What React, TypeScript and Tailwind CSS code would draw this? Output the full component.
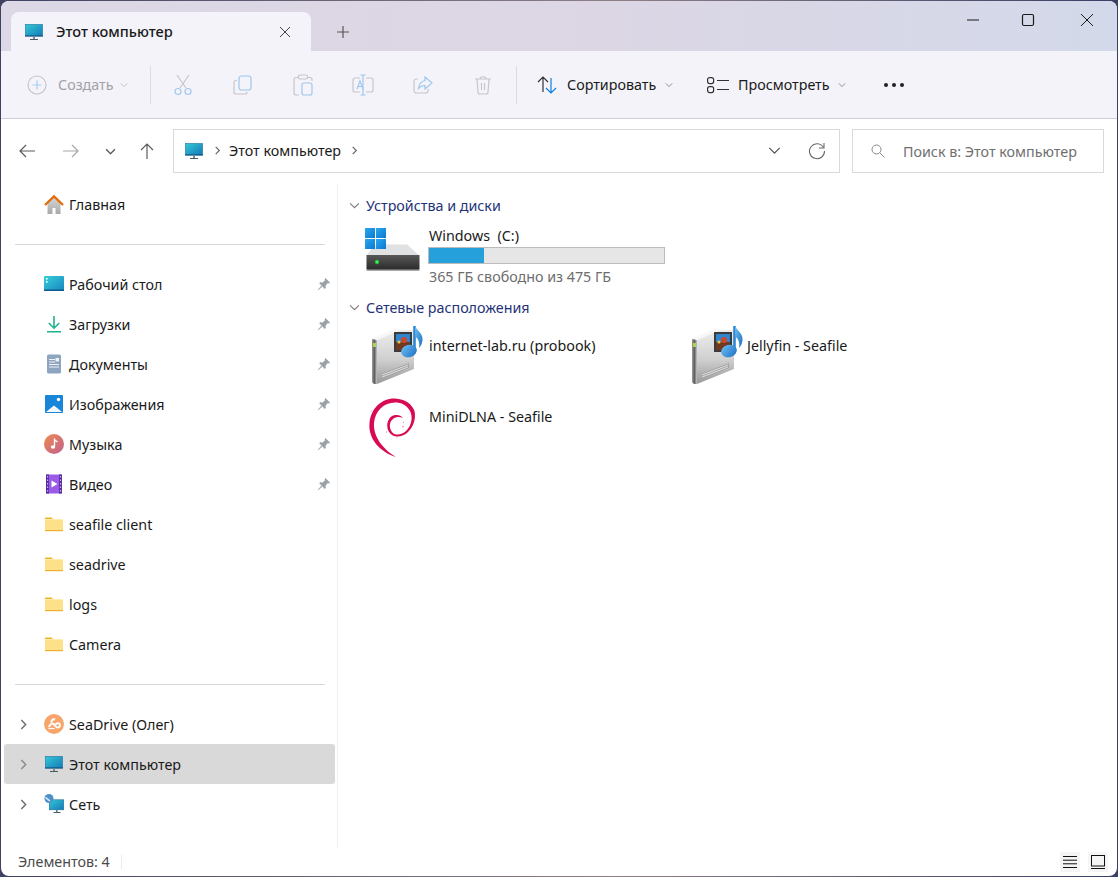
import React from "react";

const Monitor = ({ w = 20, id = "m" }: { w?: number; id?: string }) => (
  <svg width={w} height={w} viewBox="0 0 20 20" className="shrink-0">
    <defs>
      <linearGradient id={id} x1="0" y1="0" x2="1" y2="1">
        <stop offset="0" stopColor="#35c9d6" />
        <stop offset="1" stopColor="#1279b8" />
      </linearGradient>
    </defs>
    <rect x="1.5" y="2.5" width="17" height="11.5" fill={`url(#${id})`} stroke="#1a6f9f" strokeWidth="0.6" />
    <rect x="1" y="13.5" width="18" height="1" fill="#0d4f7c" />
    <rect x="9" y="14.5" width="2" height="3" fill="#7a8a94" />
    <rect x="6" y="17" width="8" height="1" fill="#4d5a63" />
  </svg>
);

const Folder = () => (
  <svg width="20" height="20" viewBox="0 0 20 20" className="shrink-0">
    <path d="M1 3.5h6.5l2 2H1z" fill="#f5b324" />
    <rect x="1" y="5" width="18" height="12" fill="#fde08a" />
    <rect x="1" y="16" width="18" height="1.2" fill="#eeb02e" />
    <rect x="1" y="5" width="18" height="0.8" fill="#fdeeb8" />
  </svg>
);

const Home = () => (
  <svg width="20" height="20" viewBox="0 0 20 20" className="shrink-0">
    <defs>
      <linearGradient id="hm" x1="0" y1="0" x2="0" y2="1">
        <stop offset="0" stopColor="#d6d6d6" />
        <stop offset="1" stopColor="#a8a8a8" />
      </linearGradient>
    </defs>
    <path d="M3.5 9.5 10 3.5l6.5 6V20h-5v-6h-3v6h-5z" fill="url(#hm)" />
    <path d="M1 11 10 2.5l9 8.5" fill="none" stroke="#e46c0a" strokeWidth="2.4" />
  </svg>
);

const Desktop = () => (
  <svg width="20" height="20" viewBox="0 0 20 20" className="shrink-0">
    <defs>
      <linearGradient id="dsk" x1="0" y1="0" x2="1" y2="1">
        <stop offset="0" stopColor="#37d0d8" />
        <stop offset="1" stopColor="#1785c2" />
      </linearGradient>
    </defs>
    <rect x="0" y="2" width="20" height="15" rx="1" fill="url(#dsk)" />
    <rect x="0" y="15.5" width="20" height="1.5" fill="#0e5a8c" />
    <rect x="2" y="4" width="1.6" height="1.6" fill="#fff" />
    <rect x="2" y="7" width="1.6" height="1.6" fill="#fff" />
  </svg>
);

const Download = () => (
  <svg width="20" height="20" viewBox="0 0 20 20" className="shrink-0">
    <path d="M10 2v12M4.8 9 10 14.2 15.2 9" fill="none" stroke="#1fb292" strokeWidth="1.6" />
    <rect x="3" y="17" width="14" height="1.5" fill="#1fb292" />
  </svg>
);

const Docs = () => (
  <svg width="20" height="20" viewBox="0 0 20 20" className="shrink-0">
    <rect x="3" y="0.5" width="14" height="19" rx="1.5" fill="#8ea5c2" />
    <rect x="5" y="5" width="6" height="1" fill="#eef2f7" />
    <rect x="5" y="7.5" width="6" height="1" fill="#eef2f7" />
    <rect x="11.5" y="4" width="3.5" height="3.5" fill="#eef2f7" />
    <rect x="5" y="10" width="10" height="1" fill="#eef2f7" />
    <rect x="5" y="12.5" width="10" height="1" fill="#eef2f7" />
  </svg>
);

const Pictures = () => (
  <svg width="20" height="20" viewBox="0 0 20 20" className="shrink-0">
    <rect x="1" y="1" width="18" height="18" rx="1" fill="#1a86d8" />
    <path d="M2 18 10 11.5 18 18z" fill="#f4f9fd" />
    <circle cx="14.5" cy="5.5" r="1.7" fill="#fff" />
  </svg>
);

const Music = () => (
  <svg width="20" height="20" viewBox="0 0 20 20" className="shrink-0">
    <defs>
      <linearGradient id="mus" x1="0" y1="0" x2="1" y2="1">
        <stop offset="0" stopColor="#ee8a4f" />
        <stop offset="1" stopColor="#c2608f" />
      </linearGradient>
    </defs>
    <circle cx="10" cy="10" r="10" fill="url(#mus)" />
    <path d="M10.5 4.5v8" stroke="#fff" strokeWidth="1.4" />
    <path d="M10.5 4.5c.5 1.8 2 2 3 2.4v1.5c-1.2-.3-2.4-.8-3-1.6z" fill="#fff" />
    <ellipse cx="9" cy="13" rx="2.2" ry="1.8" fill="#fff" />
  </svg>
);

const Video = () => (
  <svg width="20" height="20" viewBox="0 0 20 20" className="shrink-0">
    <rect x="2" y="0.5" width="16" height="19" rx="1" fill="#9a5be6" />
    <rect x="2" y="0.5" width="3" height="19" fill="#5b2da3" />
    <rect x="15" y="0.5" width="3" height="19" fill="#5b2da3" />
    {[2, 5.5, 9, 12.5, 16].map((y) => (
      <React.Fragment key={y}>
        <rect x="3" y={y} width="1.2" height="1.5" fill="#cdb2f3" />
        <rect x="15.9" y={y} width="1.2" height="1.5" fill="#cdb2f3" />
      </React.Fragment>
    ))}
    <path d="M7.5 6.5v7l6-3.5z" fill="#fff" />
  </svg>
);

const SeaDrive = () => (
  <svg width="20" height="20" viewBox="0 0 20 20" className="shrink-0">
    <circle cx="10" cy="10" r="10" fill="#f8a56c" />
    <path d="M4.5 12.5c1.5-.3 2-3 4-3 2.2 0 2.6 4 5 4 1.5 0 2.5-1 2.5-2.2s-1-2-2.2-2c-1 0-1.7.6-2.3 1.2" fill="none" stroke="#fff" strokeWidth="1.9" />
    <path d="M7.5 8.5c-.6-2 1.4-3.7 3.6-3" fill="none" stroke="#fff" strokeWidth="1.9" />
    <path d="M4.5 14.5h6" stroke="#fff" strokeWidth="1.2" />
  </svg>
);

const Network = () => (
  <svg width="20" height="20" viewBox="0 0 20 20" className="shrink-0">
    <defs>
      <linearGradient id="net" x1="0" y1="0" x2="1" y2="1">
        <stop offset="0" stopColor="#35c9d6" />
        <stop offset="1" stopColor="#1279b8" />
      </linearGradient>
    </defs>
    <rect x="5.3" y="5.8" width="14.4" height="10" fill="url(#net)" stroke="#1a6f9f" strokeWidth="0.6" />
    <rect x="12" y="16" width="1.6" height="2" fill="#6f7f89" />
    <rect x="9.5" y="18" width="7" height="1" fill="#4d5a63" />
    <circle cx="5" cy="4.5" r="4.5" fill="#4b90c8" />
    <path d="M1.5 3.5 6 7" stroke="#cfe3f2" strokeWidth="1.6" />
  </svg>
);

const Pin = () => (
  <svg width="14" height="14" viewBox="0 0 14 14" className="shrink-0">
    <path d="M8.4 1 13 5.6l-1.1.8-1-.3L8.6 8.4l.2 2.5-1 1L2.2 6.3l1-1 2.5.2L8 3.2l-.3-1z" fill="#9aa2a9" />
    <path d="M4.4 8.9 1 13l4.1-3.4z" fill="#9aa2a9" stroke="#9aa2a9" strokeWidth="0.6" />
  </svg>
);

const Chev = ({ dir = "right", c = "#7a7a7a", s = 10, sw = 1.3 }: { dir?: "right" | "down"; c?: string; s?: number; sw?: number }) => (
  <svg width={s} height={s} viewBox="0 0 10 10" className="shrink-0">
    <path d={dir === "right" ? "M3 1l4 4-4 4" : "M1 3l4 4 4-4"} fill="none" stroke={c} strokeWidth={sw} />
  </svg>
);

const Drive = () => (
  <svg width="66" height="54" viewBox="0 0 66 54" className="shrink-0 -mt-[3px]">
    <defs>
      <linearGradient id="drv" x1="0" y1="0" x2="0" y2="1">
        <stop offset="0" stopColor="#585858" />
        <stop offset="1" stopColor="#2a2a2a" />
      </linearGradient>
      <linearGradient id="win" x1="0" y1="0" x2="1" y2="1">
        <stop offset="0" stopColor="#2aa8ee" />
        <stop offset="1" stopColor="#0b78d2" />
      </linearGradient>
      <radialGradient id="led">
        <stop offset="0" stopColor="#7dff6a" />
        <stop offset="0.6" stopColor="#21d13a" />
        <stop offset="1" stopColor="#2a7a35" />
      </radialGradient>
    </defs>
    <path d="M15 22.5h32l12.5 11H6.5z" fill="#e0e1e3" />
    <path d="M6.5 33h53v13.5a1.5 1.5 0 0 1-1.5 1.5H8a1.5 1.5 0 0 1-1.5-1.5z" fill="url(#drv)" />
    <rect x="6.5" y="47.5" width="53" height="1.5" fill="#a9a9a9" />
    <circle cx="17" cy="40" r="2.4" fill="url(#led)" />
    <rect x="5" y="6" width="10" height="10" fill="url(#win)" />
    <rect x="16" y="6" width="10" height="10" fill="url(#win)" />
    <rect x="5" y="17" width="10" height="10" fill="url(#win)" />
    <rect x="16" y="17" width="10" height="10" fill="url(#win)" />
  </svg>
);

const MediaServer = ({ id }: { id: string }) => (
  <svg width="54" height="62" viewBox="8 4 54 62" className="shrink-0">
    <defs>
      <linearGradient id={`${id}a`} x1="0" y1="0" x2="0" y2="1">
        <stop offset="0" stopColor="#eeeeee" />
        <stop offset="0.55" stopColor="#cfcfcf" />
        <stop offset="1" stopColor="#9a9a9a" />
      </linearGradient>
      <linearGradient id={`${id}b`} x1="0" y1="0" x2="1" y2="0">
        <stop offset="0" stopColor="#9b9b9b" />
        <stop offset="0.5" stopColor="#5f5f5f" />
        <stop offset="1" stopColor="#c9c9c9" />
      </linearGradient>
      <linearGradient id={`${id}c`} x1="0" y1="0" x2="1" y2="1">
        <stop offset="0" stopColor="#6fc0f2" />
        <stop offset="1" stopColor="#1c6fc4" />
      </linearGradient>
    </defs>
    <path d="M15 20 38 10h14v39L15 64z" fill={`url(#${id}a)`} />
    <path d="M10 18.5 33 9h6L15 20z" fill="#f7f7f7" />
    <path d="M10 19l5 1v44h-2a3 3 0 0 1-3-3z" fill={`url(#${id}b)`} />
    <rect x="11" y="23" width="3" height="4" fill="#a5d84f" />
    <path d="M19 59 47 48v-5L19 54z" fill="#a4a4a4" />
    <path d="M20 57 46 47" stroke="#ececec" strokeWidth="0.8" />
    <path d="M20 55 46 45" stroke="#ececec" strokeWidth="0.8" />
    <rect x="32" y="12" width="18" height="20" fill="#3b3b3b" />
    <rect x="34" y="14" width="14" height="8" fill="#2f86cf" />
    <rect x="34" y="22" width="14" height="8" fill="#6e3b22" />
    <circle cx="42" cy="20" r="3" fill="#d6452a" />
    <circle cx="37" cy="22" r="1.6" fill="#e8c14a" />
    <path d="M52.5 6v25" stroke="#2f87d3" strokeWidth="2.6" />
    <path d="M53 6c2 5 8 7 7.5 14-.2 3-1.5 6-3.5 8 1-5-.5-9-3.5-11z" fill={`url(#${id}c)`} />
    <ellipse cx="47" cy="31" rx="8" ry="6.2" fill={`url(#${id}c)`} transform="rotate(-15 47 31)" />
  </svg>
);

const Debian = () => (
  <svg width="52" height="62" viewBox="4 5 52 62" className="shrink-0">
    <path
      d="M34 65C18 60 6 47 7.5 31 9 16 20 6 33 6.5 43 7 50 12 52.5 19 54 26 52 35 45 41 39 46 30 46 26.5 39 23.5 33 26 24 33 23 37 22.5 40 24 41 26 38 24.5 34 24.5 31 27 27 30 27 36 30 40 33 44 40 43 44 39 50 33 51 25 48 19 45 13 39 10.5 33 10.5 22 10.5 13 19 12 31 11 45 22 58 34 65Z"
      fill="#d70a53"
    />
    <circle cx="51.5" cy="21" r="0.8" fill="#d70a53" />
    <circle cx="41.5" cy="30" r="0.6" fill="#e2608c" />
    <circle cx="41" cy="34.5" r="0.7" fill="#e2608c" />
    <circle cx="24.5" cy="40" r="0.6" fill="#e2608c" />
    <circle cx="35" cy="45" r="0.6" fill="#e2608c" />
    <circle cx="9" cy="19" r="0.5" fill="#e2608c" />
  </svg>
);

const nav = [
  { n: "Рабочий стол", i: <Desktop />, p: true },
  { n: "Загрузки", i: <Download />, p: true },
  { n: "Документы", i: <Docs />, p: true },
  { n: "Изображения", i: <Pictures />, p: true },
  { n: "Музыка", i: <Music />, p: true },
  { n: "Видео", i: <Video />, p: true },
  { n: "seafile client", i: <Folder />, p: false },
  { n: "seadrive", i: <Folder />, p: false },
  { n: "logs", i: <Folder />, p: false },
  { n: "Camera", i: <Folder />, p: false },
];

const NavRow = ({ icon, label, pin, expand, active }: { icon: React.ReactNode; label: string; pin?: boolean; expand?: boolean; active?: boolean }) => (
  <div className={`ml-[3px] mr-[2px] h-10 rounded-[3px] flex items-center ${active ? "bg-[#d9d9d9]" : ""}`}>
    <div className="w-10 flex justify-center pr-[1px]">{expand && <Chev c={active ? "#8a8a8a" : "#6e6e6e"} s={11} />}</div>
    {icon}
    <span className="ml-[5px] pt-[2px] flex-1 text-[#1a1a1a]">{label}</span>
    {pin && <span className="mr-[4px]"><Pin /></span>}
  </div>
);

const NavSep = () => (
  <div className="h-10 flex items-center">
    <div className="ml-[14px] w-[310px] h-px bg-[#d8d8d8]" />
  </div>
);

const Tool = ({ children }: { children: React.ReactNode }) => (
  <div className="w-[60px] flex justify-center">{children}</div>
);

const Heading = ({ t }: { t: string }) => (
  <div className="flex items-center h-5 pl-[11px]">
    <Chev dir="down" c="#7d7d7d" s={11} sw={1} />
    <span className="ml-[6px] pt-[2px] text-[#1f3378]">{t}</span>
  </div>
);

const NetItem = ({ icon, label, pad }: { icon: React.ReactNode; label: string; pad: string }) => (
  <div className="flex">
    <div className={`w-[65px] shrink-0 ${pad}`}>{icon}</div>
    <span className="pt-[10px] h-[30px] text-[#1a1a1a]">{label}</span>
  </div>
);

export default function App() {
  return (
    <div className="w-[1118px] h-[877px] overflow-hidden bg-[linear-gradient(90deg,#3f4263,#8d7f86_55%,#3a3f66)] p-px text-[14.3px] [font-family:'Noto_Sans',sans-serif]">
      <div className="h-[875px] rounded-[8px] overflow-hidden flex flex-col bg-white">
        {/* Tab bar */}
        <div className="h-[50px] shrink-0 flex bg-[linear-gradient(90deg,#dcd8e6,#ddd6e4_50%,#d3d9ea)]">
          <div className="ml-[10px] mt-[11px] w-[300px] h-[39px] rounded-t-[8px] bg-[#f3f3f9] flex items-center pl-[13px] pr-[20px]">
            <Monitor id="m1" />
            <span className="ml-[12px] text-[14.6px] text-[#1a1a1a] font-medium">Этот компьютер</span>
            <svg width="12" height="12" viewBox="0 0 12 12" className="ml-auto shrink-0">
              <path d="M1 1l10 10M11 1 1 11" stroke="#444" strokeWidth="1" />
            </svg>
          </div>
          <div className="ml-[12px] mt-[11px] w-10 h-[39px] flex items-center justify-center">
            <svg width="14" height="14" viewBox="0 0 14 14">
              <path d="M7 1v12M1 7h12" stroke="#555" strokeWidth="1.2" />
            </svg>
          </div>
          <div className="ml-auto flex h-[38px] mr-px">
            <div className="w-[50px] flex items-center justify-center">
              <svg width="14" height="14" viewBox="0 0 14 14"><path d="M1 7h12" stroke="#1a1a1a" strokeWidth="1" /></svg>
            </div>
            <div className="w-[60px] flex items-center justify-center">
              <svg width="14" height="14" viewBox="0 0 14 14"><rect x="1.5" y="1.5" width="11" height="11" rx="1.5" fill="none" stroke="#1a1a1a" strokeWidth="1.2" /></svg>
            </div>
            <div className="w-[58px] flex items-center justify-center">
              <svg width="14" height="14" viewBox="0 0 14 14"><path d="M1 1l12 12M13 1 1 13" stroke="#1a1a1a" strokeWidth="1" /></svg>
            </div>
          </div>
        </div>
        {/* Command bar */}
        <div className="h-[68px] shrink-0 flex items-center bg-[#f3f3f9] border-b border-[#cfcfdc] pl-[26px] text-[#1a1a1a]">
          <svg width="20" height="20" viewBox="0 0 20 20" className="shrink-0">
            <circle cx="10" cy="10" r="9" fill="none" stroke="#c6c6cc" strokeWidth="1.2" />
            <path d="M10 5.5v9M5.5 10h9" stroke="#a9cdee" strokeWidth="1.2" />
          </svg>
          <span className="ml-[11px] w-[56px] text-[#a2a2a6]">Создать</span>
          <span className="ml-[6px]"><Chev dir="down" c="#b5b5b8" s={8} sw={1} /></span>
          <div className="ml-[22px] w-px h-[38px] bg-[#dcdce2]" />
          <div className="ml-[2px] flex items-center">
            <Tool>
              <svg width="20" height="22" viewBox="0 0 20 22">
                <path d="M4 1l9 13M16 1 7 14" stroke="#c6c6cc" strokeWidth="1.2" fill="none" />
                <circle cx="5" cy="17.5" r="3" fill="none" stroke="#9fc8ec" strokeWidth="1.2" />
                <circle cx="15" cy="17.5" r="3" fill="none" stroke="#9fc8ec" strokeWidth="1.2" />
              </svg>
            </Tool>
            <Tool>
              <svg width="20" height="20" viewBox="0 0 20 20">
                <path d="M4 5.5h-1a2 2 0 0 0-2 2V17a2 2 0 0 0 2 2h9a2 2 0 0 0 2-2" fill="none" stroke="#c6c6cc" strokeWidth="1.2" />
                <rect x="6" y="1" width="12" height="14" rx="2.5" fill="none" stroke="#9fc8ec" strokeWidth="1.2" />
              </svg>
            </Tool>
            <Tool>
              <svg width="20" height="22" viewBox="0 0 20 22">
                <path d="M5 3.5H3a2 2 0 0 0-2 2V19a2 2 0 0 0 2 2h3M15 3.5h2a2 2 0 0 1 2 1.5v2" fill="none" stroke="#c6c6cc" strokeWidth="1.2" />
                <rect x="5.5" y="1" width="9" height="4" rx="1.5" fill="none" stroke="#c6c6cc" strokeWidth="1.2" />
                <rect x="9" y="9" width="10" height="12" rx="2" fill="none" stroke="#9fc8ec" strokeWidth="1.2" />
              </svg>
            </Tool>
            <Tool>
              <svg width="22" height="22" viewBox="0 0 22 22">
                <path d="M8 4H3a2 2 0 0 0-2 2v10a2 2 0 0 0 2 2h5M14 4h5a2 2 0 0 1 2 2v10a2 2 0 0 1-2 2h-5" fill="none" stroke="#c6c6cc" strokeWidth="1.2" />
                <path d="M11 1v20M8.5 1h5M8.5 21h5" fill="none" stroke="#9fc8ec" strokeWidth="1.2" />
                <path d="M5 15l3-8 3 8M6 12.5h4" fill="none" stroke="#9fc8ec" strokeWidth="1.2" />
              </svg>
            </Tool>
            <Tool>
              <svg width="20" height="20" viewBox="0 0 20 20">
                <path d="M5 4H3.5A2.5 2.5 0 0 0 1 6.5v9A2.5 2.5 0 0 0 3.5 18h9a2.5 2.5 0 0 0 2.5-2.5V14" fill="none" stroke="#c6c6cc" strokeWidth="1.2" />
                <path d="M12 2l7 6-7 6v-3.5c-3 0-5 1-6.5 3 .3-4 2.5-7 6.5-8z" fill="none" stroke="#9fc8ec" strokeWidth="1.2" />
              </svg>
            </Tool>
            <Tool>
              <svg width="18" height="20" viewBox="0 0 18 20">
                <path d="M1 4h16M6 4c0-3 6-3 6 0M3 4l1 13a2 2 0 0 0 2 2h6a2 2 0 0 0 2-2l1-13M7.5 8v7M10.5 8v7" fill="none" stroke="#c6c6cc" strokeWidth="1.2" />
              </svg>
            </Tool>
          </div>
          <div className="ml-[3px] w-px h-[38px] bg-[#dcdce2]" />
          <svg width="20" height="20" viewBox="0 0 20 20" className="ml-[20px] shrink-0">
            <path d="M6 17V2M1 7l5-5 5 5" fill="none" stroke="#333" strokeWidth="1.2" />
            <path d="M14 3v15M9 13l5 5 5-5" fill="none" stroke="#0f7fdc" strokeWidth="1.2" />
          </svg>
          <span className="ml-[10px] w-[92px]">Сортировать</span>
          <span className="ml-[6px]"><Chev dir="down" c="#777" s={8} sw={1} /></span>
          <svg width="22" height="18" viewBox="0 0 22 18" className="ml-[34px] shrink-0">
            <rect x="0.6" y="1.6" width="6" height="6" rx="2" fill="none" stroke="#333" strokeWidth="1.2" />
            <rect x="0.6" y="10.6" width="6" height="6" rx="2" fill="none" stroke="#333" strokeWidth="1.2" />
            <path d="M10 4.5h12M10 13.5h12" stroke="#333" strokeWidth="1.2" />
          </svg>
          <span className="ml-[9px] w-[94px]">Просмотреть</span>
          <span className="ml-[6px]"><Chev dir="down" c="#777" s={8} sw={1} /></span>
          <svg width="22" height="6" viewBox="0 0 22 6" className="ml-[37px] shrink-0">
            <circle cx="3" cy="3" r="2" fill="#222" />
            <circle cx="11" cy="3" r="2" fill="#222" />
            <circle cx="19" cy="3" r="2" fill="#222" />
          </svg>
        </div>
        {/* Address row */}
        <div className="h-[65px] shrink-0 flex items-start pt-[10px]">
          <div className="w-11 ml-[4px] h-11 flex items-center justify-center">
            <svg width="18" height="16" viewBox="0 0 18 16"><path d="M17 8H2M8 2 2 8l6 6" fill="none" stroke="#5c5c5c" strokeWidth="1.2" /></svg>
          </div>
          <div className="w-11 h-11 flex items-center justify-center">
            <svg width="18" height="16" viewBox="0 0 18 16"><path d="M1 8h15M10 2l6 6-6 6" fill="none" stroke="#a8a8a8" strokeWidth="1.2" /></svg>
          </div>
          <div className="w-[34px] h-11 flex items-center justify-center">
            <Chev dir="down" c="#5c5c5c" s={11} sw={1.2} />
          </div>
          <div className="w-10 h-11 flex items-center justify-center">
            <svg width="16" height="18" viewBox="0 0 16 18"><path d="M8 17V2M2 8l6-6 6 6" fill="none" stroke="#5c5c5c" strokeWidth="1.2" /></svg>
          </div>
          <div className="ml-[6px] w-[667px] h-11 border border-[#d9d9d9] flex items-center pl-[10px] pb-px">
            <Monitor id="m2" />
            <span className="ml-[9px]"><Chev c="#666" s={9} /></span>
            <span className="ml-[7px] text-[#1a1a1a]">Этот компьютер</span>
            <span className="ml-[9px]"><Chev c="#666" s={9} /></span>
            <span className="ml-auto"><Chev dir="down" c="#555" s={13} sw={1} /></span>
            <svg width="18" height="18" viewBox="0 0 18 18" className="ml-[27px] mr-[13px] shrink-0">
              <path d="M15.5 5.5A7.5 7.5 0 1 0 16.5 9" fill="none" stroke="#666" strokeWidth="1.1" />
              <path d="M16 1v5h-5" fill="none" stroke="#666" strokeWidth="1.1" />
            </svg>
          </div>
          <div className="ml-[12px] w-[252px] h-11 border border-[#d9d9d9] flex items-center pl-[18px]">
            <svg width="14" height="14" viewBox="0 0 14 14" className="shrink-0">
              <circle cx="5.5" cy="5.5" r="4.5" fill="none" stroke="#8a8a8a" strokeWidth="1" />
              <path d="M9 9l4.5 4.5" stroke="#8a8a8a" strokeWidth="1" />
            </svg>
            <span className="ml-[18px] pt-[2px] text-[#6f6f6f]">Поиск в: Этот компьютер</span>
          </div>
        </div>
        {/* Main */}
        <div className="flex-1 flex min-h-0">
          <div className="w-[337px] shrink-0 border-r border-[#f0f0f0]">
            <NavRow icon={<Home />} label="Главная" />
            <NavSep />
            {nav.map((r) => (
              <NavRow key={r.n} icon={r.i} label={r.n} pin={r.p} />
            ))}
            <NavSep />
            <NavRow icon={<SeaDrive />} label="SeaDrive (Олег)" expand />
            <NavRow icon={<Monitor id="m3" />} label="Этот компьютер" expand active />
            <NavRow icon={<Network />} label="Сеть" expand />
          </div>
          <div className="flex-1 pt-[11px]">
            <Heading t="Устройства и диски" />
            <div className="flex pl-[22px] mt-[10px] h-[72px]">
              <div className="w-[68px] shrink-0"><Drive /></div>
              <div className="flex flex-col">
                <span className="h-5 pl-px leading-[22px] text-[#1a1a1a] whitespace-pre">Windows  (C:)</span>
                <div className="mt-[2px] w-[237px] h-[17px] bg-[#e6e6e6] border border-[#bcbcbc]">
                  <div className="h-full w-[55px] bg-[#26a0da]" />
                </div>
                <span className="mt-[3px] h-5 pl-px leading-5 text-[#6d6d6d]">365 ГБ свободно из 475 ГБ</span>
              </div>
            </div>
            <Heading t="Сетевые расположения" />
            <div className="mt-2 ml-[26px] grid grid-cols-[318px_318px] auto-rows-[71px]">
              <NetItem icon={<MediaServer id="a" />} label="internet-lab.ru (probook)" pad="pl-[6px] -mt-px" />
              <NetItem icon={<MediaServer id="b" />} label="Jellyfin - Seafile" pad="pl-[8px] -mt-px" />
              <NetItem icon={<Debian />} label="MiniDLNA - Seafile" pad="pl-[2px] pt-px" />
            </div>
          </div>
        </div>
        {/* Status */}
        <div className="h-[28px] shrink-0 flex items-center pl-[17px] pr-[9px] text-[#4a4a4a]">
          <span className="w-[103px]">Элементов: 4</span>
          <div className="w-px h-[14px] bg-[#ececec]" />
          <div className="ml-auto w-5 h-5 bg-[#f5f5f5] flex items-center justify-center">
            <svg width="16" height="14" viewBox="0 0 16 14"><path d="M1 1.5h14M1 5.2h14M1 8.8h14M1 12.5h14" stroke="#111" strokeWidth="1" /></svg>
          </div>
          <div className="ml-2 w-5 h-5 bg-[#f5f5f5] flex items-center justify-center">
            <svg width="16" height="15" viewBox="0 0 16 15"><rect x="1.5" y="0.5" width="13" height="10.5" fill="none" stroke="#111" strokeWidth="1" /><path d="M1 13.5h14" stroke="#111" strokeWidth="1" /></svg>
          </div>
        </div>
      </div>
    </div>
  );
}
